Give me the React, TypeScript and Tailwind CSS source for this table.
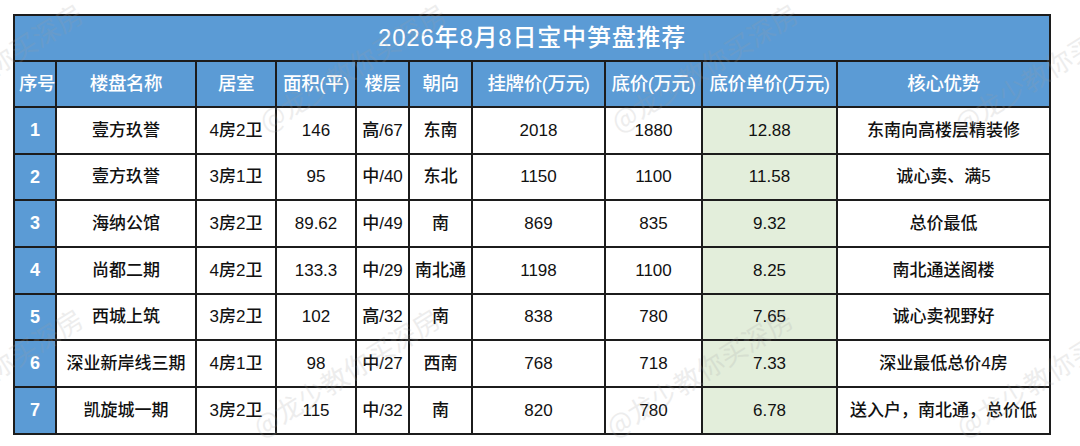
const columns = [
  { label: '序号', width: 42 },
  { label: '楼盘名称', width: 140 },
  { label: '居室', width: 80 },
  { label: '面积(平)', width: 80 },
  { label: '楼层', width: 53 },
  { label: '朝向', width: 63 },
  { label: '挂牌价(万元)', width: 133 },
  { label: '底价(万元)', width: 97 },
  { label: '底价单价(万元)', width: 135 },
  { label: '核心优势', width: 213 },
];

type Listing = {
  name: string;
  rooms: string;
  area: string;
  floor: string;
  facing: string;
  listPrice: string;
  floorPrice: string;
  unitPrice: string;
  note: string;
};

const listings: Listing[] = [
  { name: '壹方玖誉', rooms: '4房2卫', area: '146', floor: '高/67', facing: '东南', listPrice: '2018', floorPrice: '1880', unitPrice: '12.88', note: '东南向高楼层精装修' },
  { name: '壹方玖誉', rooms: '3房1卫', area: '95', floor: '中/40', facing: '东北', listPrice: '1150', floorPrice: '1100', unitPrice: '11.58', note: '诚心卖、满5' },
  { name: '海纳公馆', rooms: '3房2卫', area: '89.62', floor: '中/49', facing: '南', listPrice: '869', floorPrice: '835', unitPrice: '9.32', note: '总价最低' },
  { name: '尚都二期', rooms: '4房2卫', area: '133.3', floor: '中/29', facing: '南北通', listPrice: '1198', floorPrice: '1100', unitPrice: '8.25', note: '南北通送阁楼' },
  { name: '西城上筑', rooms: '3房2卫', area: '102', floor: '高/32', facing: '南', listPrice: '838', floorPrice: '780', unitPrice: '7.65', note: '诚心卖视野好' },
  { name: '深业新岸线三期', rooms: '4房1卫', area: '98', floor: '中/27', facing: '西南', listPrice: '768', floorPrice: '718', unitPrice: '7.33', note: '深业最低总价4房' },
  { name: '凯旋城一期', rooms: '3房2卫', area: '115', floor: '中/32', facing: '南', listPrice: '820', floorPrice: '780', unitPrice: '6.78', note: '送入户，南北通，总价低' },
];

// faint diagonal watermark, anchored at the baseline of the "@"
const watermarks = [
  { left: -95, top: 135 },
  { left: 268, top: 135 },
  { left: 620, top: 135 },
  { left: 963, top: 137 },
  { left: -95, top: 440 },
  { left: 262, top: 440 },
  { left: 615, top: 440 },
  { left: 965, top: 440 },
];

const cell = 'border-2 border-[#1c1c1c] text-center align-middle px-1 whitespace-nowrap';

export default function App() {
  return (
    <div className="relative w-[1080px] h-[446px] overflow-hidden bg-white pl-[13px] pt-[14px] font-['Liberation_Sans','Noto_Sans_CJK_SC',sans-serif] text-[17px] text-[#111]">
      <table className="border-collapse table-fixed w-[1036px]">
        <colgroup>
          {columns.map((c) => (
            <col key={c.label} style={{ width: c.width }} />
          ))}
        </colgroup>
        <thead>
          <tr className="h-[46px]">
            <th
              colSpan={10}
              className={`${cell} bg-[#5b9bd5] text-white text-[24px] font-medium tracking-[0.8px]`}
            >
              2026年8月8日宝中笋盘推荐
            </th>
          </tr>
          <tr className="h-[46px]">
            {columns.map((c) => (
              <th key={c.label} className={`${cell} px-0 bg-[#5b9bd5] text-white font-medium text-[18.5px] tracking-[-0.4px]`}>
                {c.label}
              </th>
            ))}
          </tr>
        </thead>
        <tbody className="font-medium">
          {listings.map((l, i) => (
            <tr key={i} className="h-[46.7px]">
              <td className={`${cell} bg-[#5b9bd5] text-white font-bold text-[18px]`}>{i + 1}</td>
              <td className={cell}>{l.name}</td>
              <td className={cell}>{l.rooms}</td>
              <td className={cell}>{l.area}</td>
              <td className={`${cell} px-0`}>{l.floor}</td>
              <td className={cell}>{l.facing}</td>
              <td className={cell}>{l.listPrice}</td>
              <td className={cell}>{l.floorPrice}</td>
              <td className={`${cell} bg-[#e3eedb]`}>{l.unitPrice}</td>
              <td className={cell}>{l.note}</td>
            </tr>
          ))}
        </tbody>
      </table>

      {watermarks.map((w, i) => (
        <span
          key={i}
          className="pointer-events-none absolute origin-bottom-left -rotate-[32deg] whitespace-nowrap text-[27px] leading-none text-[#a0a0a0] opacity-[0.18] font-['Noto_Sans_CJK_SC',sans-serif]"
          style={{ left: w.left, top: w.top - 27 }}
        >
          @龙少教你买深房
        </span>
      ))}
    </div>
  );
}
